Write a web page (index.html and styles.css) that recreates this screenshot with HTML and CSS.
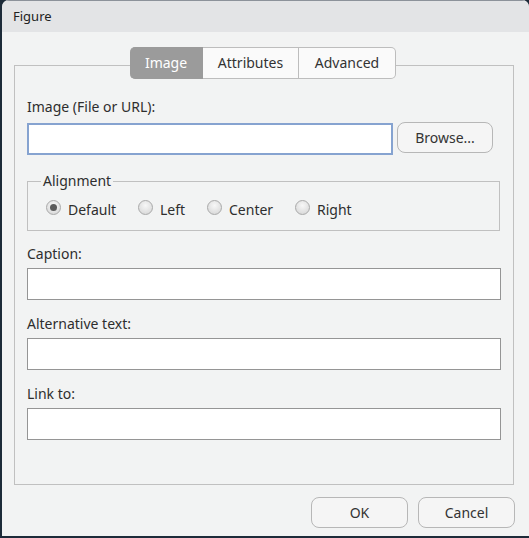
FILE: index.html
```
<!DOCTYPE html>
<html>
<head>
<meta charset="utf-8">
<link rel="stylesheet" href="styles.css">
</head>
<body>
<div class="window">
  <div class="titlebar">Figure</div>
  <div class="content">
    <div class="tabs">
      <div class="tab active">Image</div>
      <div class="tab">Attributes</div>
      <div class="tab last">Advanced</div>
    </div>
    <div class="panel">
      <div class="label first">Image (File or URL):</div>
      <div class="file-row">
        <div class="input focused"></div>
        <div class="btn browse">Browse...</div>
      </div>
      <fieldset class="align">
        <legend>Alignment</legend>
        <div class="radios">
          <div class="radio-item r-default"><span class="radio checked"></span>Default</div>
          <div class="radio-item r-left"><span class="radio"></span>Left</div>
          <div class="radio-item r-center"><span class="radio"></span>Center</div>
          <div class="radio-item"><span class="radio"></span>Right</div>
        </div>
      </fieldset>
      <div class="label after-align">Caption:</div>
      <div class="input wide"></div>
      <div class="label">Alternative text:</div>
      <div class="input wide"></div>
      <div class="label">Link to:</div>
      <div class="input wide"></div>
    </div>
    <div class="footer">
      <div class="btn">OK</div>
      <div class="btn">Cancel</div>
    </div>
  </div>
</div>
</body>
</html>
```
FILE: styles.css
```
* { box-sizing: border-box; }
html, body { margin: 0; padding: 0; }
body {
  background: #1d2b39;
  width: 529px;
  height: 538px;
  overflow: hidden;
  font-family: "Noto Sans", "Open Sans", sans-serif;
  font-size: 14px;
  color: #2e2e2e;
}
.window {
  margin-left: 2px;
  width: 527px;
  height: 536px;
  background: #f2f3f3;
  border-radius: 7px 7px 0 0;
  overflow: hidden;
}
.titlebar {
  height: 32px;
  background: #e3e4e6;
  border-top: 1px solid #8c929a;
  padding-left: 11px;
  font-size: 13px;
  line-height: 30px;
  color: #222;
}
.content {
  padding: 15px 0 0 12px;
}
.tabs {
  display: flex;
  justify-content: center;
  position: relative;
  z-index: 1;
  width: 500px;
  margin-bottom: -14px;
  padding-right: 2px;
}
.tab {
  height: 32px;
  line-height: 30px;
  border: 1px solid #bdbdbd;
  border-left: none;
  background: #fafafa;
  color: #333;
  text-align: center;
}
.tab:nth-child(2) { width: 96px; }
.tab.last { width: 97px; border-radius: 0 5px 5px 0; }
.tab.active {
  width: 73px;
  background: #9b9b9b;
  border-color: #9b9b9b;
  color: #fff;
  border-radius: 5px 0 0 5px;
}
.panel {
  border: 1px solid #c0c0c0;
  width: 500px;
  height: 420px;
  padding: 0 12px 0 12px;
}
.label {
  height: 18px;
  line-height: 18px;
  margin-top: 15px;
  margin-bottom: 5px;
}
.label.first { margin-top: 32px; margin-bottom: 6px; }
.label.after-align { margin-top: 14px; }
.file-row {
  display: flex;
  align-items: flex-start;
  gap: 4px;
}
.input {
  height: 32px;
  background: #fff;
  border: 1px solid #959595;
}
.input.focused {
  width: 366px;
  margin-top: 1px;
  border: 2px solid #86a3d0;
}
.input.wide { width: 474px; }
.btn {
  width: 97px;
  height: 31px;
  line-height: 29px;
  text-align: center;
  border: 1px solid #b7b7b7;
  border-radius: 8px;
  background: #f5f5f5;
  color: #333;
}
.btn.browse { width: 96px; }
.align {
  margin: 17px 0 0 0;
  width: 473px;
  padding: 0 0 0 18px;
  border: 1px solid #c0c0c0;
  height: 59px;
}
.align legend {
  padding: 0 2px;
  margin-left: -5px;
  line-height: 18px;
}
.radios {
  display: flex;
  align-items: center;
  margin-top: 8px;
}
.radio-item {
  display: flex;
  align-items: center;
  height: 22px;
}
.r-default { width: 92px; }
.r-left { width: 69px; }
.r-center { width: 88px; }
.radio {
  width: 15px;
  height: 15px;
  border-radius: 50%;
  border: 1px solid #a9a9a9;
  background: radial-gradient(circle at 50% 35%, #f7f7f7 0%, #dedede 70%, #cfcfcf 100%);
  margin-right: 7px;
  margin-top: -3px;
  position: relative;
}
.radio.checked::after {
  content: "";
  position: absolute;
  left: 3px;
  top: 3px;
  width: 7px;
  height: 7px;
  border-radius: 50%;
  background: #5a5a5a;
}
.footer {
  display: flex;
  justify-content: flex-end;
  gap: 10px;
  margin-top: 12px;
  width: 501px;
}
```
